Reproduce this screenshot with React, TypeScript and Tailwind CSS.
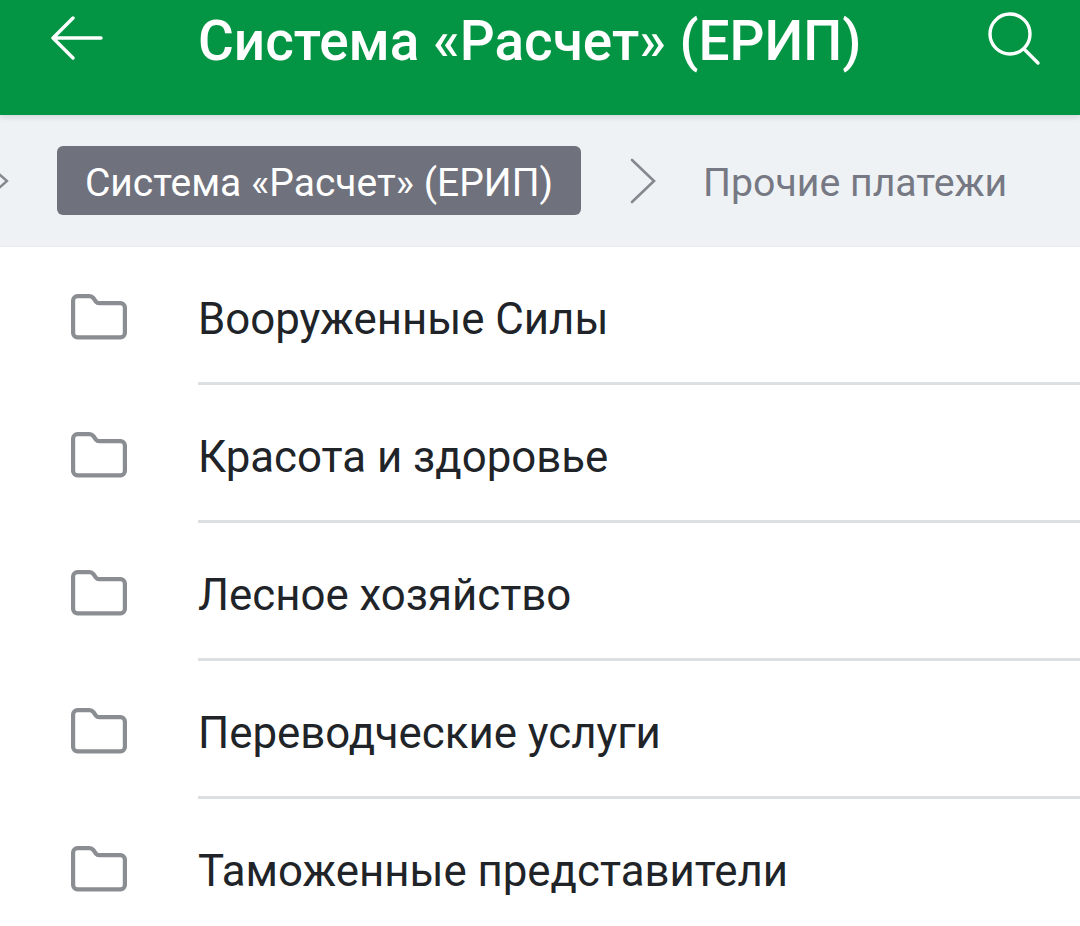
const categories = [
  "Вооруженные Силы",
  "Красота и здоровье",
  "Лесное хозяйство",
  "Переводческие услуги",
  "Таможенные представители",
];

function FolderIcon() {
  return (
    <svg width="56" height="46" viewBox="0 0 56 46" fill="none" stroke="#8a8d92" strokeWidth="4.2" strokeLinejoin="round" className="block shrink-0">
      <path d="M2.100 6.500a4.400 4.400 0 0 1 4.400-4.400h11.900c1.600 0 3 .7 4 2l2.400 3.300c.9 1.200 2 1.800 3.500 1.800h21.200a4.400 4.400 0 0 1 4.400 4.400v25.300a4.400 4.400 0 0 1-4.400 4.400h-43a4.400 4.400 0 0 1-4.400-4.400z" />
    </svg>
  );
}

export default function App() {
  return (
    <div className="w-[1080px] h-[926px] overflow-hidden bg-white font-['Roboto',sans-serif]">
      {/* HEADER */}
      <header className="relative z-10 flex h-[115px] items-start bg-[#039543] shadow-[0_2px_6px_rgba(0,0,0,0.12)]">
        <svg width="54" height="46" viewBox="0 0 54 46" fill="none" stroke="white" strokeWidth="3.4" strokeLinecap="round" strokeLinejoin="round" className="ml-[50px] mt-[16px] shrink-0">
          <path d="M51 22H3M23 2 3 22l20 20" />
        </svg>
        <h1 className="ml-[94px] mt-[9px] text-[54.900px] leading-[64px] font-medium text-white whitespace-nowrap">
          Система «Расчет» (ЕРИП)
        </h1>
        <svg width="54" height="54" viewBox="0 0 54 54" fill="none" stroke="white" strokeWidth="3.4" strokeLinecap="round" className="ml-auto mr-[39px] mt-[12px] shrink-0">
          <circle cx="23" cy="22" r="20" />
          <path d="m37 37 14 14" />
        </svg>
      </header>

      {/* BREADCRUMBS */}
      <nav className="flex h-[132px] items-center bg-[#eff2f5] border-b border-[#e8ebef]">
        <svg width="10" height="20" viewBox="0 0 10 20" fill="none" stroke="#85888f" strokeWidth="2.400" className="shrink-0">
          <path d="M-2 2 7 10l-9 8" />
        </svg>
        <span className="ml-[47px] flex h-[69px] w-[524px] items-center justify-center rounded-[6px] bg-[#6f717c] pt-[5px] text-[39px] text-white whitespace-nowrap">
          Система «Расчет» (ЕРИП)
        </span>
        <svg width="28" height="46" viewBox="0 0 28 46" fill="none" stroke="#85888f" strokeWidth="2.600" strokeLinecap="round" className="ml-[48px] shrink-0">
          <path d="m3 2 22 21L3 44" />
        </svg>
        <span className="ml-[46px] pt-[5px] text-[39.250px] text-[#767983] whitespace-nowrap">Прочие платежи</span>
      </nav>

      {/* LIST */}
      <ul>
        {categories.map((name, i) => (
          <li key={name} className="flex h-[138px] pl-[71px]">
            <div className="mt-[47px]">
              <FolderIcon />
            </div>
            <div className={`ml-[71px] flex-1 pt-[40px] ${i < categories.length - 1 ? "border-b-[3px] border-[#dde0e3]" : ""}`}>
              <span className="text-[43.800px] leading-[64px] text-[#202428] whitespace-nowrap">{name}</span>
            </div>
          </li>
        ))}
      </ul>
    </div>
  );
}
